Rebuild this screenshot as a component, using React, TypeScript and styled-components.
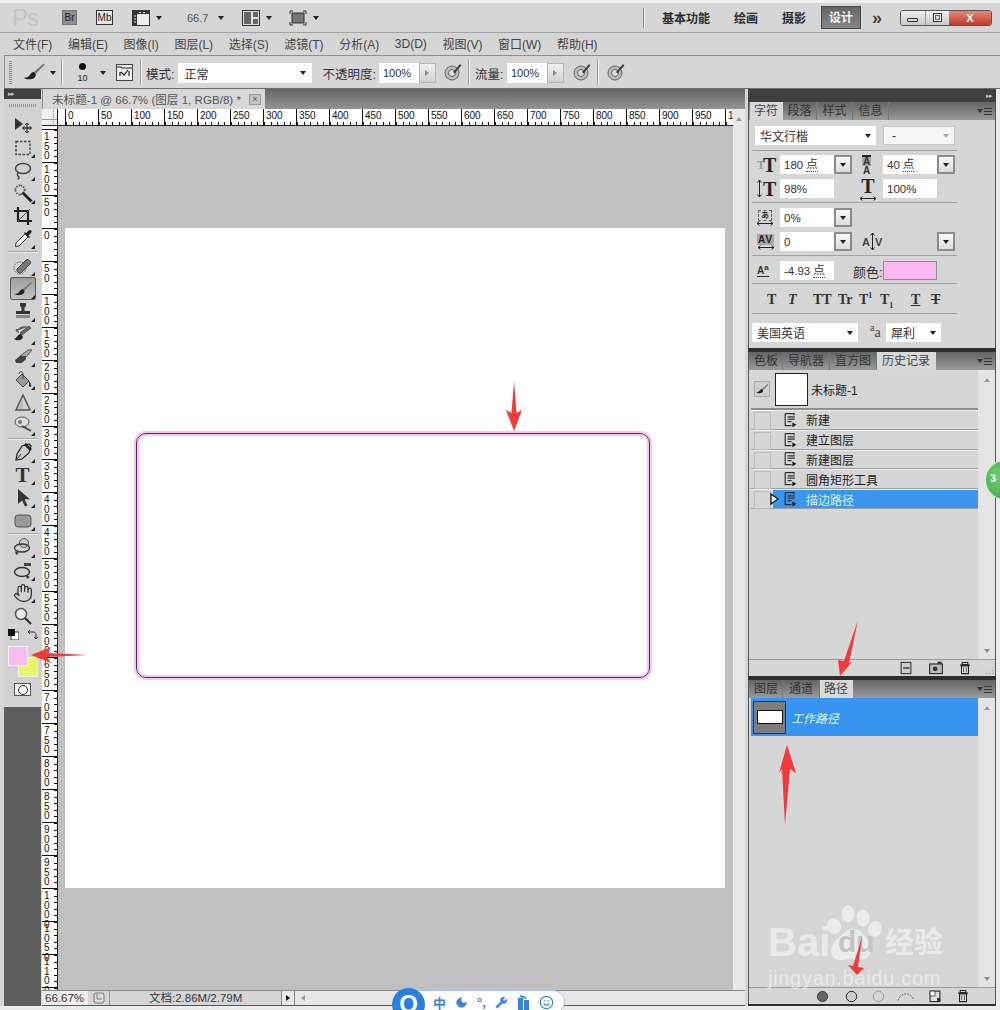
import React from 'react';
import styled, { createGlobalStyle } from 'styled-components';
import { Hand, Moon, Smile, Wrench } from 'lucide-react';

const GlobalStyle = createGlobalStyle`
  html, body { margin: 0; padding: 0; background: #d6d6d6; }
  body { font-family: "Liberation Sans", "Noto Sans CJK SC", sans-serif; color: #333; }
  * { box-sizing: border-box; }
`;

const Page = styled.div`
  position: relative;
  width: 1000px;
  height: 1010px;
  overflow: hidden;
  display: flex;
  flex-direction: column;
  background: #d6d6d6;
`;

/* ---------- title bar ---------- */
const TitleBar = styled.div`
  height: 33px;
  flex: none;
  display: flex;
  align-items: center;
  padding: 3px 8px 0 0;
  background: linear-gradient(#f0f0f0 0 3px, #d6d6d6 3px);
  border-bottom: 1px solid #a2a2a2;
`;
const Logo = styled.div`
  margin-left: 12px;
  width: 23px;
  font-size: 24px;
  line-height: 24px;
  color: #c4c4c4;
  letter-spacing: -1px;
`;
const BridgeBadge = styled.div<{ $ml: number; $w: number; $dark?: boolean }>`
  margin-left: ${p => p.$ml}px;
  width: ${p => p.$w}px;
  height: 15px;
  font-size: 10px;
  line-height: 13px;
  text-align: center;
  color: #222;
  background: ${p => (p.$dark ? '#8f8f8f' : '#e6e6e6')};
  border: 1px solid ${p => (p.$dark ? '#777' : '#333')};
`;
const TitleIcon = styled.div<{ $ml: number }>`
  margin-left: ${p => p.$ml}px;
  display: flex;
`;
const Caret = styled.span<{ $ml?: number; $c?: string }>`
  display: inline-block;
  flex: none;
  margin-left: ${p => p.$ml ?? 0}px;
  width: 0;
  height: 0;
  border-left: 3.5px solid transparent;
  border-right: 3.5px solid transparent;
  border-top: 4px solid ${p => p.$c ?? '#222'};
`;
const ZoomValue = styled.div`
  margin-left: 25px;
  width: 21px;
  font-size: 11px;
  color: #555;
`;
const TitleDivider = styled.div`
  margin-left: auto;
  width: 2px;
  height: 20px;
  border-left: 1px solid #8a8a8a;
  border-right: 1px solid #f0f0f0;
`;
const Workspace = styled.div<{ $ml: number }>`
  margin-left: ${p => p.$ml}px;
  font-size: 12px;
  font-weight: 700;
  color: #2c2c2c;
  white-space: nowrap;
`;
const ActiveWorkspace = styled.div`
  margin-left: 15px;
  width: 40px;
  height: 23px;
  line-height: 22px;
  text-align: center;
  font-size: 12px;
  font-weight: 700;
  color: #f4f4f4;
  background: linear-gradient(#666, #858585);
  border: 1px solid #4a4a4a;
`;
const MoreChevrons = styled.div`
  margin-left: 11px;
  width: 14px;
  font-size: 18px;
  line-height: 18px;
  font-weight: 700;
  color: #444;
`;
const WindowButtons = styled.div`
  margin-left: 14px;
  display: flex;
  height: 16px;
  width: 92px;
  border: 1px solid #555;
  border-radius: 3px;
  overflow: hidden;
`;
const WindowButton = styled.div<{ $close?: boolean }>`
  flex: ${p => (p.$close ? '0 0 42px' : '1')};
  display: flex;
  align-items: center;
  justify-content: center;
  font-size: 11px;
  font-weight: 700;
  color: #fff;
  background: ${p => (p.$close ? 'linear-gradient(#e58a78, #bc3b2a)' : 'linear-gradient(#f0f0f0, #c8c8c8)')};
  border-left: ${p => (p.$close ? 'none' : '1px solid #999')};
  &:first-child { border-left: none; }
`;
const MinGlyph = styled.span`
  width: 11px;
  height: 4px;
  margin-top: 5px;
  border: 1px solid #333;
  border-radius: 1px;
`;
const MaxGlyph = styled.span`
  width: 9px;
  height: 9px;
  border: 1px solid #333;
  box-shadow: inset 0 0 0 1px #eee, inset 0 0 0 2px #666;
`;

/* ---------- menu + options ---------- */
const MenuBar = styled.div`
  height: 22px;
  flex: none;
  display: flex;
  align-items: center;
  gap: 15.6px;
  padding: 0 0 1px 13px;
  font-size: 12px;
  color: #444;
`;
const OptionsBar = styled.div`
  height: 34px;
  flex: none;
  margin-left: 4px;
  padding-top: 2px;
  display: flex;
  align-items: center;
  background: #d6d6d6;
  border-top: 1px solid #8e8e8e;
  border-left: 1px solid #8e8e8e;
  border-bottom: 1px solid #6e6e6e;
`;
const Grip = styled.div`
  margin-left: 4px;
  width: 3px;
  height: 24px;
  background: repeating-linear-gradient(180deg, #8a8a8a 0 1px, transparent 1px 2px);
`;
const OptIcon = styled.div<{ $ml: number }>`
  margin-left: ${p => p.$ml}px;
  display: flex;
  align-items: center;
  margin-top: -2px;
`;
const OptDivider = styled.div<{ $ml: number }>`
  margin-left: ${p => p.$ml}px;
  width: 1px;
  height: 26px;
  margin-top: -2px;
  background: #a0a0a0;
  box-shadow: 1px 0 0 #efefef;
`;
const BrushTip = styled.div`
  margin-left: 12px;
  width: 17px;
  margin-top: -1px;
  display: flex;
  flex-direction: column;
  align-items: center;
  font-size: 9px;
  line-height: 10px;
  color: #222;
`;
const TipDot = styled.span`
  width: 7px;
  height: 7px;
  margin: 1px 0 3px;
  border-radius: 50%;
  background: #111;
`;
const OptLabel = styled.div<{ $ml: number }>`
  margin-left: ${p => p.$ml}px;
  font-size: 12.5px;
  color: #333;
  white-space: nowrap;
`;
const ModeSelect = styled.div`
  margin-left: 4px;
  width: 134px;
  height: 20px;
  padding: 0 6px;
  display: flex;
  align-items: center;
  justify-content: space-between;
  font-size: 12px;
  background: #fff;
`;
const PercentField = styled.div<{ $ml: number }>`
  margin-left: ${p => p.$ml}px;
  width: 40px;
  height: 20px;
  padding-left: 4px;
  font-size: 11px;
  line-height: 20px;
  background: #fff;
`;
const Stepper = styled.div`
  width: 17px;
  height: 20px;
  display: flex;
  align-items: center;
  justify-content: center;
  background: linear-gradient(#f2f2f2, #d0d0d0);
  border: 1px solid #b4b4b4;
`;
const SideCaret = styled.span<{ $c?: string }>`
  width: 0;
  height: 0;
  border-top: 3px solid transparent;
  border-bottom: 3px solid transparent;
  border-left: 4px solid ${p => p.$c ?? '#888'};
`;

/* ---------- workspace ---------- */
const Main = styled.div`
  height: 917px;
  flex: none;
  display: flex;
`;
const BottomEdge = styled.div`
  flex: 1;
  background: #ececec;
`;
const RightGutter = styled.div`
  flex: 1;
  background: #ececec;
`;

/* left tools */
const ToolColumn = styled.div`
  width: 37px;
  margin-left: 4px;
  margin-right: 1px;
  display: flex;
  flex-direction: column;
  background: #5e5e5e;
`;
const DarkStrip = styled.div<{ $h: number; $right?: boolean }>`
  height: ${p => p.$h}px;
  flex: none;
  font-size: 7px;
  line-height: ${p => p.$h}px;
  letter-spacing: -1px;
  color: #c8c8c8;
  padding: 0 4px;
  text-align: ${p => (p.$right ? 'right' : 'left')};
  background: #3f3f3f;
`;
const Toolbar = styled.div`
  position: relative;
  height: 608px;
  flex: none;
  padding-top: 14.6px;
  background: #d2d2d2;
  display: flex;
  flex-direction: column;
  align-items: center;
  &::before {
    content: '';
    position: absolute;
    top: 5px;
    left: 5px;
    right: 5px;
    height: 3px;
    background: repeating-linear-gradient(90deg, #999 0 1px, transparent 1px 2px);
  }
`;
const Tool = styled.div<{ $active?: boolean; $corner?: boolean }>`
  position: relative;
  flex: none;
  width: ${p => (p.$active ? 26 : 32)}px;
  height: 22.8px;
  display: flex;
  align-items: center;
  justify-content: center;
  border-radius: 3px;
  background: ${p => (p.$active ? 'linear-gradient(#9c9c9c, #c4c4c4)' : 'none')};
  box-shadow: ${p => (p.$active ? 'inset 0 0 0 1px #5a5a5a' : 'none')};
  &::after {
    content: '';
    display: ${p => (p.$corner ? 'block' : 'none')};
    position: absolute;
    right: ${p => (p.$active ? 1 : 4)}px;
    bottom: 1px;
    border-left: 4px solid transparent;
    border-bottom: 4px solid #222;
  }
`;
const ToolSep = styled.div`
  flex: none;
  width: 30px;
  height: 4px;
  background: linear-gradient(transparent 1px, #a4a4a4 1px, #a4a4a4 2px, #eee 2px, #eee 3px, transparent 3px);
`;
const SerifT = styled.span`
  font-family: "Liberation Serif", serif;
  font-size: 21px;
  line-height: 22px;
  font-weight: 700;
  color: #333;
`;
const DefaultColors = styled.div`
  flex: none;
  width: 30px;
  height: 14px;
  display: flex;
  align-items: center;
  justify-content: space-between;
`;
const ColorWell = styled.div`
  position: relative;
  flex: none;
  width: 30px;
  height: 31px;
  margin-top: 5px;
`;
const Foreground = styled.div`
  position: relative;
  z-index: 1;
  width: 20px;
  height: 20px;
  background: #f8bdf0;
  border: 1px solid #f2f2f2;
`;
const Background = styled.div`
  position: absolute;
  left: 10px;
  top: 11px;
  width: 20px;
  height: 20px;
  background: #e6f56c;
  border: 1px solid #efefef;
`;
const MaskButton = styled.div`
  flex: none;
  width: 17px;
  height: 13px;
  margin-top: 6px;
  background: #f4f4f4;
  border: 1px solid #555;
  display: flex;
  align-items: center;
  justify-content: center;
  &::after {
    content: '';
    width: 8px;
    height: 8px;
    border: 1px solid #333;
    border-radius: 50%;
  }
`;

/* document */
const DocColumn = styled.div`
  width: 703px;
  flex: none;
  display: flex;
  flex-direction: column;
`;
const DocTabs = styled.div`
  height: 20px;
  flex: none;
  background: linear-gradient(#666, #939393);
`;
const DocTab = styled.div`
  width: 223px;
  height: 20px;
  padding: 0 4px 0 9px;
  display: flex;
  align-items: center;
  justify-content: space-between;
  font-size: 11.6px;
  color: #555;
  white-space: nowrap;
  background: #d8d8d8;
  border-left: 1px solid #8a8a8a;
`;
const TabClose = styled.span`
  width: 12px;
  height: 11px;
  flex: none;
  font-size: 9px;
  line-height: 9px;
  text-align: center;
  color: #555;
  background: #c4c4c4;
  border: 1px solid #999;
`;
const DocBody = styled.div`
  flex: 1;
  min-height: 0;
  display: flex;
`;
const DocMain = styled.div`
  width: 691px;
  flex: none;
  display: flex;
  flex-direction: column;
`;
const RulerTop = styled.div`
  height: 17px;
  flex: none;
  display: flex;
  background: #fff;
  border-bottom: 1px solid #222;
`;
const RulerCorner = styled.div`
  width: 16px;
  flex: none;
  background:
    linear-gradient(#999, #999) 0 10px / 100% 1px no-repeat,
    repeating-linear-gradient(180deg, #888 0 1px, transparent 1px 2px) 11px 0 / 1px 100% no-repeat,
    #f2f2f2;
  border-right: 1px solid #222;
`;
const RulerTrack = styled.div`
  flex: 1;
  min-width: 0;
  padding-left: 7px;
  display: flex;
  overflow: hidden;
`;
const RulerCell = styled.div`
  flex: 0 0 33px;
  padding: 1px 0 0 2px;
  font-size: 10px;
  line-height: 11px;
  color: #111;
  border-left: 1px solid #111;
  background: repeating-linear-gradient(90deg, #111 0 1px, transparent 1px 6.6px) 0 100% / 100% 3px no-repeat;
`;
const CanvasRow = styled.div`
  flex: 1;
  min-height: 0;
  display: flex;
`;
const RulerLeft = styled.div`
  width: 16px;
  flex: none;
  padding-top: 3px;
  overflow: hidden;
  background: #fff;
  border-right: 1px solid #222;
`;
const RulerRow = styled.div`
  height: 33px;
  padding: 2px 0 0 2px;
  font-size: 10px;
  line-height: 9.6px;
  color: #111;
  border-top: 1px solid #111;
  background: repeating-linear-gradient(180deg, #111 0 1px, transparent 1px 6.6px) 100% 0 / 3px 100% no-repeat;
`;
const RulerDigits = styled.div`
  width: 7px;
  word-break: break-all;
`;
const Canvas = styled.div`
  flex: 1;
  padding: 102px 0 0 7px;
  background: #c0c0c0;
`;
const Sheet = styled.div`
  width: 660px;
  height: 660px;
  padding: 205px 0 0 71px;
  background: #fff;
`;
const StrokedPath = styled.div`
  width: 514px;
  height: 245px;
  border: 1.5px solid #58245f;
  border-radius: 10px;
  box-shadow: 0 0 0 2px #f6c8f0, inset 0 0 0 2px #f6c8f0;
`;
const VScroll = styled.div`
  width: 12px;
  flex: none;
  padding-top: 8px;
  display: flex;
  justify-content: center;
  background: #e8e8e8;
`;
const UpCaret = styled.span`
  width: 0;
  height: 0;
  border-left: 3.5px solid transparent;
  border-right: 3.5px solid transparent;
  border-bottom: 4px solid #9a9a9a;
`;
const StatusBar = styled.div`
  height: 16px;
  flex: none;
  display: flex;
  align-items: stretch;
  font-size: 11.5px;
  line-height: 15px;
  border-top: 1px solid #888;
  border-bottom: 1px solid #555;
`;
const ZoomField = styled.div`
  width: 46px;
  padding-left: 3px;
  background: #eee;
`;
const StatusIcon = styled.div`
  width: 22px;
  display: flex;
  align-items: center;
  justify-content: center;
  border-right: 1px solid #999;
`;
const DocInfo = styled.div`
  width: 171px;
  padding-left: 39px;
  white-space: nowrap;
`;
const StatusArrow = styled.div`
  width: 14px;
  display: flex;
  align-items: center;
  justify-content: center;
  background: #e8e8e8;
  border-left: 1px solid #888;
  border-right: 1px solid #888;
`;
const HScroll = styled.div`
  flex: 1;
  padding-left: 6px;
  display: flex;
  align-items: center;
  background: #e8e8e8;
`;
const LeftCaret = styled.span`
  width: 0;
  height: 0;
  border-top: 3px solid transparent;
  border-bottom: 3px solid transparent;
  border-right: 4px solid #999;
`;

/* right panels */
const RightColumn = styled.div`
  width: 248px;
  flex: none;
  margin-left: 3px;
  display: flex;
  flex-direction: column;
  background: #2e2e2e;
  border-bottom: 1px solid #333;
`;
const Panel = styled.div<{ $h: number; $mt?: number }>`
  height: ${p => p.$h}px;
  flex: none;
  margin-top: ${p => p.$mt ?? 0}px;
  display: flex;
  flex-direction: column;
  background: #d6d6d6;
  border-left: 1px solid #555;
  border-right: 1px solid #555;
`;
const TabStrip = styled.div`
  height: 18px;
  flex: none;
  display: flex;
  align-items: stretch;
  padding-left: 1px;
  background: linear-gradient(#646464, #9a9a9a);
`;
const PanelTab = styled.div<{ $w: number; $active?: boolean }>`
  width: ${p => p.$w}px;
  flex: none;
  text-align: center;
  font-size: 12px;
  line-height: 18px;
  color: ${p => (p.$active ? '#444' : '#333')};
  background: ${p => (p.$active ? '#d8d8d8' : 'transparent')};
  border-right: 1px solid ${p => (p.$active ? '#d8d8d8' : '#777')};
`;
const PanelMenu = styled.div`
  margin-left: auto;
  margin-right: 3px;
  display: flex;
  align-items: center;
  gap: 1px;
`;
const MenuLines = styled.span`
  width: 8px;
  height: 7px;
  background: repeating-linear-gradient(180deg, #333 0 1px, transparent 1px 3px);
`;
const CharRow = styled.div<{ $mt: number; $shift?: number }>`
  height: 19px;
  flex: none;
  margin-top: ${p => p.$mt}px;
  padding-left: ${p => 6 + (p.$shift ?? 0)}px;
  display: flex;
  align-items: stretch;
`;
const CharSep = styled.div<{ $mt: number }>`
  height: 1px;
  flex: none;
  width: 205px;
  margin: ${p => p.$mt}px 0 0 3px;
  background: #a2a2a2;
`;
const FontSelect = styled.div<{ $w: number }>`
  width: ${p => p.$w}px;
  padding: 0 5px;
  display: flex;
  align-items: center;
  justify-content: space-between;
  font-size: 12px;
  background: #fff;
`;
const StyleSelect = styled.div`
  width: 72px;
  margin-left: 7px;
  padding: 0 5px 0 8px;
  display: flex;
  align-items: center;
  justify-content: space-between;
  font-size: 12px;
  background: #f6f6f6;
  border: 1px solid #c4c4c4;
`;
const CharIcon = styled.div<{ $w: number; $pl?: number }>`
  position: relative;
  width: ${p => p.$w}px;
  flex: none;
  display: flex;
  align-items: center;
  padding-left: ${p => p.$pl ?? 2}px;
`;
/* real letters used as the little character-panel marks */
const SerifMark = styled.span<{ $size: number; $c?: string; $ml?: number }>`
  font-family: "Liberation Serif", serif;
  font-size: ${p => p.$size}px;
  line-height: 1;
  font-weight: 700;
  margin-left: ${p => p.$ml ?? 0}px;
  color: ${p => p.$c ?? '#222'};
`;
const StackMark = styled.div`
  display: flex;
  flex-direction: column;
  align-items: center;
  font-size: 10px;
  line-height: 9px;
  font-weight: 700;
  color: #333;
`;
const LeadingTop = styled.span`
  padding: 0 1px;
  color: #333;
  background: #a8a8a8;
  border-top: 2px solid #222;
`;
const BoxedKana = styled.span`
  width: 14px;
  height: 11px;
  font-size: 8px;
  line-height: 9px;
  text-align: center;
  color: #333;
  border: 1px dashed #666;
`;
const KernLetters = styled.span`
  padding: 0 1px;
  font-size: 10px;
  line-height: 11px;
  font-weight: 700;
  letter-spacing: 1px;
  color: #222;
  background: #a8a8a8;
`;
const TrackLetters = styled.span`
  display: flex;
  align-items: center;
  font-size: 11px;
  font-weight: 700;
  color: #444;
`;
const ShiftLetters = styled.span`
  font-size: 10px;
  line-height: 11px;
  font-weight: 700;
  color: #333;
  border-bottom: 1px solid #333;
  sup { font-size: 8px; line-height: 0; }
`;
const CharField = styled.div<{ $disabled?: boolean }>`
  width: 54px;
  flex: none;
  padding-left: 4px;
  display: flex;
  align-items: center;
  gap: 3px;
  font-size: 11.5px;
  color: #333;
  white-space: nowrap;
  background: ${p => (p.$disabled ? '#d4d4d4' : '#fff')};
`;
const DottedUnit = styled.span`
  border-bottom: 1px dotted #444;
  line-height: 14px;
`;
const DropButton = styled.div`
  width: 18px;
  flex: none;
  display: flex;
  align-items: center;
  justify-content: center;
  background: linear-gradient(#fafafa, #dcdcdc);
  border: 2px solid #8c8c8c;
`;
const ColorLabel = styled.div`
  width: 30px;
  flex: none;
  font-size: 13px;
  line-height: 24px;
  white-space: nowrap;
  color: #333;
`;
const TextColor = styled.div`
  width: 54px;
  flex: none;
  background: #fbb9f2;
  border: 1px solid #8e8e8e;
`;
const StyleButtons = styled.div`
  height: 20px;
  flex: none;
  margin-top: 6px;
  padding-left: 18px;
  display: flex;
  align-items: center;
`;
const StyleGlyph = styled.span<{ $w: number; $italic?: boolean; $under?: boolean; $strike?: boolean }>`
  width: ${p => p.$w}px;
  flex: none;
  font-family: "Liberation Serif", serif;
  font-size: 14px;
  font-weight: 700;
  font-style: ${p => (p.$italic ? 'italic' : 'normal')};
  text-decoration: ${p => (p.$under ? 'underline' : p.$strike ? 'line-through' : 'none')};
  color: #333;
  white-space: nowrap;
  sup, sub { font-size: 8px; line-height: 0; }
`;
const AaGlyph = styled.div`
  width: 28px;
  flex: none;
  padding-left: 12px;
  font-family: "Liberation Serif", serif;
  font-size: 14px;
  line-height: 19px;
  color: #444;
  white-space: nowrap;
  sup { font-size: 10px; line-height: 0; }
`;

const PanelBody = styled.div<{ $h: number }>`
  height: ${p => p.$h}px;
  flex: none;
  display: flex;
`;
const ListArea = styled.div`
  flex: 1;
  min-width: 0;
  padding-left: 2px;
`;
const PanelScroll = styled.div`
  width: 17px;
  flex: none;
  display: flex;
  flex-direction: column;
  align-items: center;
  justify-content: space-between;
  padding: 8px 0 6px;
  background: #e4e4e4;
`;
const DownCaret = styled(Caret)`
  border-top-color: #8a8a8a;
`;
const Snapshot = styled.div`
  height: 40px;
  display: flex;
  align-items: center;
  font-size: 12px;
  color: #222;
  border-bottom: 2px solid #8e8e8e;
`;
const SnapshotSource = styled.div`
  width: 16px;
  height: 16px;
  margin-left: 3px;
  display: flex;
  align-items: center;
  justify-content: center;
  border: 1px solid #aaa;
  background: #cfcfcf;
`;
const Thumb = styled.div`
  width: 33px;
  height: 33px;
  margin: 0 3px 0 5px;
  background: #fff;
  border: 1px solid #222;
`;
const HistoryRow = styled.div`
  height: 19.8px;
  display: flex;
  align-items: stretch;
  border-bottom: 1px solid #a0a0a0;
  border-top: 1px solid #eee;
`;
const CheckCell = styled.div`
  position: relative;
  width: 22px;
  flex: none;
  padding: 1px 0 1px 3px;
  &::before {
    content: '';
    display: block;
    width: 15px;
    height: 100%;
    border: 1px solid #bcbcbc;
  }
`;
const StateMarker = styled.svg`
  position: absolute;
  left: 19px;
  top: 3px;
`;
const HistoryName = styled.div<{ $selected?: boolean }>`
  flex: 1;
  padding-left: 9px;
  display: flex;
  align-items: center;
  gap: 8px;
  font-size: 12px;
  color: ${p => (p.$selected ? '#d8f2ff' : '#222')};
  background: ${p => (p.$selected ? '#3b96ee' : 'transparent')};
`;
const PathRow = styled.div`
  height: 38px;
  padding-left: 2px;
  display: flex;
  align-items: center;
  background: #3794f0;
`;
const PathThumb = styled.div`
  width: 33px;
  height: 33px;
  display: flex;
  align-items: center;
  justify-content: center;
  background: #7d7d7d;
  border: 1px solid #123a6c;
  &::after {
    content: '';
    width: 24px;
    height: 12px;
    background: #fff;
    border: 1px solid #111;
  }
`;
const PathName = styled.div`
  margin-left: 5px;
  font-size: 12px;
  font-style: italic;
  color: #d8f6ff;
`;
const PanelFooter = styled.div<{ $h: number }>`
  height: ${p => p.$h}px;
  flex: none;
  position: relative;
  display: flex;
  align-items: center;
  border-top: 1px solid #9a9a9a;
`;
const FooterIcon = styled.div<{ $ml: number }>`
  margin-left: ${p => p.$ml}px;
  display: flex;
`;
const SizeGrip = styled.span`
  position: absolute;
  right: 1px;
  bottom: 1px;
  width: 9px;
  height: 9px;
  background: radial-gradient(circle, #999 0 1px, transparent 1px) 0 0 / 3px 3px;
  clip-path: polygon(100% 0, 100% 100%, 0 100%);
`;

/* things lying over the window */
const ArrowLayer = styled.svg`
  position: absolute;
  left: 0;
  top: 0;
  z-index: 5;
  pointer-events: none;
`;
const Badge = styled.div`
  position: absolute;
  left: 985px;
  top: 460px;
  width: 40px;
  height: 40px;
  padding: 11px 0 0 4px;
  z-index: 4;
  font-size: 11px;
  font-weight: 700;
  color: #fff;
  border-radius: 50%;
  background: radial-gradient(circle at 40% 40%, #6fd06f, #37a53f);
  border: 1px solid #d8f0d8;
`;
const Watermark = styled.div`
  position: absolute;
  left: 768px;
  top: 905px;
  width: 190px;
  z-index: 3;
  color: rgba(255, 255, 255, 0.5);
  pointer-events: none;
`;
const Paw = styled.svg`
  position: absolute;
  left: 52px;
  top: 0;
`;
const WaterTop = styled.div`
  position: relative;
  height: 60px;
  display: flex;
  align-items: flex-end;
`;
const WaterBai = styled.span`
  font-size: 40px;
  line-height: 46px;
  font-weight: 700;
  width: 70px;
`;
const WaterDu = styled.span`
  position: relative;
  font-size: 30px;
  line-height: 46px;
  font-weight: 700;
  width: 47px;
  color: #c4c4c4;
`;
const WaterCn = styled.span`
  font-size: 29px;
  line-height: 44px;
  font-weight: 700;
`;
const WaterUrl = styled.div`
  margin-top: 1px;
  font-size: 20px;
  line-height: 24px;
  letter-spacing: 0.7px;
`;
const ImeBar = styled.div`
  position: absolute;
  left: 402px;
  top: 990px;
  width: 163px;
  height: 24px;
  z-index: 4;
  padding-left: 30px;
  display: flex;
  align-items: center;
  gap: 9px;
  color: #3a84d0;
  font-size: 13px;
  font-weight: 700;
  background: #fff;
  border: 1px solid #a8c8e8;
  border-radius: 12px;
`;
const ImeLogo = styled.div`
  position: absolute;
  left: 392px;
  top: 988px;
  width: 33px;
  height: 33px;
  z-index: 5;
  padding-top: 2px;
  text-align: center;
  font-size: 24px;
  line-height: 27px;
  font-weight: 700;
  color: #fff;
  border-radius: 50%;
  background: #2a7fdc;
`;

/* ---------- icons ---------- */
const I = ({ s = 20, children }: { s?: number; children: React.ReactNode }) => (
  <svg width={s} height={s} viewBox="0 0 20 20">{children}</svg>
);
const ink = '#333';
const BrushGlyph = ({ s = 20 }: { s?: number }) => (
  <I s={s}>
    <path d="M18 3 10 10l1.5 1.5L19 4z" fill="#777" />
    <path d="M10 10c-3 0-3 3-5 4-1 .6-2.5 1-3.5 1 2 1.6 7 1.6 9-.5 1-1.2 1.5-2.5.5-3.5z" fill="#222" />
  </I>
);
const Target = () => (
  <I>
    <circle cx="9" cy="11" r="7" fill="#bbb" stroke="#666" />
    <circle cx="9" cy="11" r="3.5" fill="#ddd" stroke="#666" />
    <path d="m10 10 7-8 1.5 1.5-7 8z" fill="#444" />
  </I>
);
const toolIcons: Record<string, React.ReactNode> = {
  move: <I><path d="M2 3v12l8-6z" fill={ink} /><path d="M14 8v10M9.5 13h9" stroke={ink} strokeWidth="1.3" /><path d="m12 10 2-2 2 2M12 16l2 2 2-2M11.5 11l-2 2 2 2M16.5 11l2 2-2 2" stroke={ink} fill="none" /></I>,
  marquee: <I><rect x="3" y="3.5" width="14" height="13" fill="none" stroke="#444" strokeWidth="1.4" strokeDasharray="2.5 1.5" /></I>,
  lasso: <I><ellipse cx="10" cy="7.5" rx="7.5" ry="5" fill="none" stroke="#444" strokeWidth="1.5" /><path d="M5 12c-1 1.5-.5 3 .5 3.5S6 18 4.5 18" fill="none" stroke="#444" strokeWidth="1.4" /></I>,
  wand: <I><circle cx="7" cy="7" r="4.5" fill="none" stroke="#555" strokeWidth="1.8" strokeDasharray="1.3 1.1" /><path d="M1 7h2M11 7h2M7 1v2M7 11v2" stroke="#666" /><path d="m9.500 9.500 9 9" stroke="#222" strokeWidth="2.8" /></I>,
  crop: <I><path d="M5 1v14h14M1 5h14v14" fill="none" stroke="#222" strokeWidth="2.2" /><path d="m5 15 12-12" stroke="#555" /></I>,
  eyedropper: <I><path d="m12 5-9 9-.5 3.5L6 17l9-9z" fill="#eee" stroke="#333" /><path d="m11 4 5 5 1-1-1.5-1.5L18 4c.8-1 .8-1.8 0-2.5s-1.6-.6-2.5.2l-2.5 2.5L12 3z" fill="#222" /></I>,
  heal: <I><circle cx="7" cy="12" r="6" fill="none" stroke="#555" strokeDasharray="1.5 1.2" /><path d="m4 13 9-9c2-2 6 2 4 4l-9 9c-2 1-5-2-4-4z" fill="#777" stroke="#444" /></I>,
  brush: <BrushGlyph />,
  stamp: <I><path d="M7 2h6v3l-1.5 1.5V10H17v3H3v-3h5.5V6.500L7 5z" fill="#333" /><rect x="3" y="14" width="14" height="3" fill="#888" /></I>,
  history: <I><path d="M16 2 7 9l2 2 9-7zM14 3c-4-1-9 1-10 4" fill="#666" stroke="#555" /><path d="M8 10c-3 0-3 3-7 5 3 2 8 2 9-2z" fill="#222" /><path d="M4 5c-2 2 0 3 2 3" fill="none" stroke="#333" /></I>,
  eraser: <I><path d="M7 9 15 3h4l-6 7z" fill="#aaa" stroke="#555" /><path d="M2 13 7 9h6v3l-4 4H3z" fill="#444" /></I>,
  bucket: <I><path d="m3 10 6-6 7 7-6 6z" fill="#999" stroke="#444" /><path d="M6 4c0-3 4-3 4 0v5" fill="none" stroke="#444" /><path d="M16 11c1.500 2 3 4 2 5.500-1 1-2.500 0-2-1.500z" fill="#333" /></I>,
  blur: <I><path d="M10 2 3 17h14z" fill="none" stroke="#555" strokeWidth="1.5" /><path d="M10 6 5.500 16H10z" fill="#bbb" /></I>,
  dodge: <I><ellipse cx="9" cy="7" rx="7" ry="5" fill="#ddd" stroke="#555" /><circle cx="7" cy="7" r="2" fill="#777" /><path d="m9 11 9 5" stroke="#444" strokeWidth="2" /></I>,
  pen: <I><path d="M16 2 9 4 4 12l-1 6 6-1 7-6 2-7z" fill="#ccc" stroke="#222" strokeWidth="1.2" /><path d="m3 18 5-6" stroke="#222" /><path d="m13 1 6 6-2 2-6-6z" fill="#222" /></I>,
  select: <I><path d="M5 1v15l4-3.500 3 6 2.500-1.200-3-6H17z" fill="#333" /></I>,
  shape: <I><rect x="2" y="4" width="16" height="12" rx="3" fill="#999" stroke="#555" /></I>,
  rotate: <I><circle cx="11" cy="6" r="4.5" fill="#ccc" stroke="#555" /><ellipse cx="9" cy="11" rx="7.5" ry="4" fill="none" stroke="#333" strokeWidth="1.3" /><path d="m2 14 4 2-3 2z" fill="#333" /></I>,
  orbit: <I><ellipse cx="9" cy="12" rx="7.500" ry="4.500" fill="none" stroke="#333" strokeWidth="1.4" /><rect x="11" y="3" width="7" height="3" fill="#444" /><path d="m13 15 4 2-3 2z" fill="#333" /></I>,
  hand: <Hand size={20} strokeWidth={1.5} color="#333" />,
  zoom: <I><circle cx="8" cy="8" r="5.500" fill="#eee" stroke="#555" strokeWidth="1.5" /><path d="m12 12 6 6" stroke="#333" strokeWidth="2.2" /></I>,
};

const FileDocIcon = ({ s = 16 }: { s?: number }) => (
  <I s={s}>
    <path d="M4 2h11v2M4 2v15h8M7 6h9M7 9h9M7 12h5" fill="none" stroke="#333" strokeWidth="1.5" />
    <path d="M13 13v6l5-3z" fill="#111" />
  </I>
);
const NewLayerIcon = () => (
  <I s={14}><rect x="3" y="2" width="14" height="16" fill="#ccc" stroke="#333" strokeWidth="1.5" /><rect x="6" y="9" width="9" height="2" fill="#333" /></I>
);
const CameraIcon = () => (
  <I s={16}><rect x="2" y="5" width="16" height="12" fill="#bbb" stroke="#333" strokeWidth="1.5" /><rect x="12" y="2" width="5" height="3" fill="#333" /><circle cx="9" cy="11" r="3" fill="#333" /></I>
);
const TrashIcon = () => (
  <I s={14}><path d="M6 2h8v3H6z" fill="none" stroke="#222" strokeWidth="1.5" /><rect x="3" y="5" width="14" height="2" fill="#222" /><path d="M5 7h10v11H5z" fill="#ddd" stroke="#222" strokeWidth="1.5" /><path d="M8 9v7M12 9v7" stroke="#222" /></I>
);
const NewItemIcon = () => (
  <I s={14}><rect x="3" y="3" width="14" height="15" fill="#ddd" stroke="#222" strokeWidth="1.5" /><path d="M3 3h7v7H3z" fill="#fff" stroke="#222" /><path d="M13 13h4v4h-4z" fill="#222" /></I>
);
const WideArrow = ({ w = 16 }: { w?: number }) => (
  <svg width={w} height="5" viewBox={`0 0 ${w} 5`}>
    <path d={`M0 2.500h${w}M2.500 .5 0 2.500l2.500 2M${w - 2.5} .5 ${w} 2.500l-2.500 2`} fill="none" stroke="#222" />
  </svg>
);
const TallArrow = ({ h = 17 }: { h?: number }) => (
  <svg width="5" height={h} viewBox={`0 0 5 ${h}`}>
    <path d={`M2.500 0v${h}M.5 2.500 2.500 0l2 2.500M.5 ${h - 2.5} 2.500 ${h}l2-2.500`} fill="none" stroke="#222" />
  </svg>
);

const tools1 = ['move', 'marquee', 'lasso', 'wand', 'crop', 'eyedropper'];
const tools2 = ['heal', 'brush', 'stamp', 'history', 'eraser', 'bucket', 'blur', 'dodge'];
const tools3 = ['pen', 'type', 'select', 'shape'];
const tools4 = ['rotate', 'orbit', 'hand', 'zoom'];
const noCorner = ['move', 'zoom', 'crop'];

const renderTool = (name: string) => (
  <Tool key={name} $active={name === 'brush'} $corner={!noCorner.includes(name)}>
    {name === 'type' ? <SerifT>T</SerifT> : toolIcons[name]}
  </Tool>
);

const menus = ['文件(F)', '编辑(E)', '图像(I)', '图层(L)', '选择(S)', '滤镜(T)', '分析(A)', '3D(D)', '视图(V)', '窗口(W)', '帮助(H)'];
const topLabels = Array.from({ length: 21 }, (_, i) => (i === 20 ? '1' : String(i * 50)));
const sideLabels = [150, 100, 50, ...Array.from({ length: 24 }, (_, i) => i * 50)];
const historyItems = ['新建', '建立图层', '新建图层', '圆角矩形工具', '描边路径'];

const App = () => (
  <Page>
    <GlobalStyle />

    <TitleBar>
      <Logo>Ps</Logo>
      <BridgeBadge $ml={27} $w={15} $dark>Br</BridgeBadge>
      <BridgeBadge $ml={19} $w={17}>Mb</BridgeBadge>
      <TitleIcon $ml={19}>
        <svg width="18" height="16" viewBox="0 0 18 16">
          <rect x="0.5" y="0.5" width="17" height="15" fill="#eee" stroke="#333" />
          <rect x="1" y="1" width="16" height="3" fill="#333" />
          <rect x="1" y="1" width="4" height="14" fill="#333" />
          <path d="M2 6h2M2 9h2M2 12h2M7 2.500h2M11 2.500h2" stroke="#eee" />
        </svg>
      </TitleIcon>
      <Caret $ml={6} />
      <ZoomValue>66.7</ZoomValue>
      <Caret $ml={10} />
      <TitleIcon $ml={18}>
        <svg width="18" height="16" viewBox="0 0 18 16">
          <rect x="0.5" y="0.5" width="17" height="15" fill="#ddd" stroke="#333" />
          <rect x="2" y="2" width="7" height="12" fill="#666" />
          <rect x="11" y="2" width="5" height="5" fill="#666" />
          <rect x="11" y="9" width="5" height="5" fill="#666" />
        </svg>
      </TitleIcon>
      <Caret $ml={6} />
      <TitleIcon $ml={17}>
        <svg width="18" height="16" viewBox="0 0 18 16">
          <rect x="3" y="3" width="12" height="10" fill="#777" stroke="#333" />
          <path d="M1 4V1h3M14 1h3v3M17 12v3h-3M4 15H1v-3" fill="none" stroke="#333" />
        </svg>
      </TitleIcon>
      <Caret $ml={6} />
      <TitleDivider />
      <Workspace $ml={17}>基本功能</Workspace>
      <Workspace $ml={24}>绘画</Workspace>
      <Workspace $ml={24}>摄影</Workspace>
      <ActiveWorkspace>设计</ActiveWorkspace>
      <MoreChevrons>»</MoreChevrons>
      <WindowButtons>
        <WindowButton><MinGlyph /></WindowButton>
        <WindowButton><MaxGlyph /></WindowButton>
        <WindowButton $close>X</WindowButton>
      </WindowButtons>
    </TitleBar>

    <MenuBar>
      {menus.map(m => <span key={m}>{m}</span>)}
    </MenuBar>

    <OptionsBar>
      <Grip />
      <OptIcon $ml={10}><BrushGlyph s={24} /></OptIcon>
      <Caret $ml={4} />
      <OptDivider $ml={5} />
      <BrushTip><TipDot />10</BrushTip>
      <Caret $ml={9} />
      <OptIcon $ml={10}>
        <svg width="17" height="17" viewBox="0 0 17 17">
          <rect x="0.500" y="0.500" width="16" height="16" fill="#eee" stroke="#444" />
          <path d="M1 3h4l1 1h10M5 8l3 3 4-5M4 8v4M13 7v5" fill="none" stroke="#222" strokeWidth="1.2" />
        </svg>
      </OptIcon>
      <OptDivider $ml={7} />
      <OptLabel $ml={5}>模式:</OptLabel>
      <ModeSelect>正常<Caret /></ModeSelect>
      <OptLabel $ml={10}>不透明度:</OptLabel>
      <PercentField $ml={3}>100%</PercentField>
      <Stepper><SideCaret /></Stepper>
      <OptIcon $ml={7}><Target /></OptIcon>
      <OptDivider $ml={5} />
      <OptLabel $ml={6}>流量:</OptLabel>
      <PercentField $ml={3.5}>100%</PercentField>
      <Stepper><SideCaret /></Stepper>
      <OptIcon $ml={8}><Target /></OptIcon>
      <OptDivider $ml={5} />
      <OptIcon $ml={8}><Target /></OptIcon>
    </OptionsBar>

    <Main>
      <ToolColumn>
        <DarkStrip $h={10}>▸▸</DarkStrip>
        <Toolbar>
          {tools1.map(renderTool)}
          <ToolSep />
          {tools2.map(renderTool)}
          <ToolSep />
          {tools3.map(renderTool)}
          <ToolSep />
          {tools4.map(renderTool)}
          <DefaultColors>
            <svg width="11" height="11" viewBox="0 0 11 11">
              <rect x="3" y="3" width="8" height="8" fill="#fff" stroke="#333" />
              <rect width="7" height="7" fill="#111" />
            </svg>
            <svg width="11" height="11" viewBox="0 0 11 11">
              <path d="M3 1 1 3l2 2M1 3h5c2 0 3 1 3 3v3M7 8l2 2 2-2" fill="none" stroke="#333" />
            </svg>
          </DefaultColors>
          <ColorWell>
            <Foreground />
            <Background />
          </ColorWell>
          <MaskButton />
        </Toolbar>
      </ToolColumn>

      <DocColumn>
        <DocTabs>
          <DocTab>
            未标题-1 @ 66.7% (图层 1, RGB/8) *
            <TabClose>×</TabClose>
          </DocTab>
        </DocTabs>
        <DocBody>
          <DocMain>
            <RulerTop>
              <RulerCorner />
              <RulerTrack>
                {topLabels.map(t => <RulerCell key={t}>{t}</RulerCell>)}
              </RulerTrack>
            </RulerTop>
            <CanvasRow>
              <RulerLeft>
                {sideLabels.map((n, i) => (
                  <RulerRow key={i}><RulerDigits>{n}</RulerDigits></RulerRow>
                ))}
              </RulerLeft>
              <Canvas>
                <Sheet>
                  <StrokedPath />
                </Sheet>
              </Canvas>
            </CanvasRow>
          </DocMain>
          <VScroll><UpCaret /></VScroll>
        </DocBody>
        <StatusBar>
          <ZoomField>66.67%</ZoomField>
          <StatusIcon>
            <svg width="12" height="12" viewBox="0 0 12 12">
              <rect x="1" y="1" width="10" height="10" rx="2" fill="#ddd" stroke="#777" />
              <path d="M4 2v5h5" fill="none" stroke="#777" />
            </svg>
          </StatusIcon>
          <DocInfo>文档:2.86M/2.79M</DocInfo>
          <StatusArrow><SideCaret $c="#111" /></StatusArrow>
          <HScroll><LeftCaret /></HScroll>
        </StatusBar>
      </DocColumn>

      <RightColumn>
        <DarkStrip $h={13} $right>▸▸</DarkStrip>
        <Panel $h={246}>
          <TabStrip>
            <PanelTab $w={33} $active>字符</PanelTab>
            <PanelTab $w={34}>段落</PanelTab>
            <PanelTab $w={36}>样式</PanelTab>
            <PanelTab $w={36}>信息</PanelTab>
            <PanelMenu><Caret $c="#333" /><MenuLines /></PanelMenu>
          </TabStrip>
          <CharRow $mt={6}>
            <FontSelect $w={121}>华文行楷<Caret /></FontSelect>
            <StyleSelect>-<Caret $c="#aaa" /></StyleSelect>
          </CharRow>
          <CharSep $mt={5} />
          <CharRow $mt={4}>
            <CharIcon $w={25}>
              <SerifMark $size={12} $c="#999">T</SerifMark>
              <SerifMark $size={20} $ml={-2}>T</SerifMark>
            </CharIcon>
            <CharField>180 <DottedUnit>点</DottedUnit></CharField>
            <DropButton><Caret /></DropButton>
            <CharIcon $w={31} $pl={10}>
              <StackMark><LeadingTop>A</LeadingTop><span>A</span></StackMark>
            </CharIcon>
            <CharField>40 <DottedUnit>点</DottedUnit></CharField>
            <DropButton><Caret /></DropButton>
          </CharRow>
          <CharRow $mt={5}>
            <CharIcon $w={25}>
              <TallArrow />
              <SerifMark $size={20} $ml={1}>T</SerifMark>
            </CharIcon>
            <CharField>98%</CharField>
            <CharIcon $w={49} $pl={26}>
              <StackMark>
                <SerifMark $size={20}>T</SerifMark>
                <WideArrow />
              </StackMark>
            </CharIcon>
            <CharField>100%</CharField>
          </CharRow>
          <CharSep $mt={4} />
          <CharRow $mt={5}>
            <CharIcon $w={25}>
              <StackMark>
                <BoxedKana>あ</BoxedKana>
                <WideArrow />
              </StackMark>
            </CharIcon>
            <CharField>0%</CharField>
            <DropButton><Caret /></DropButton>
          </CharRow>
          <CharRow $mt={5}>
            <CharIcon $w={25}>
              <StackMark>
                <KernLetters>AV</KernLetters>
                <WideArrow />
              </StackMark>
            </CharIcon>
            <CharField>0</CharField>
            <DropButton><Caret /></DropButton>
            <CharIcon $w={31} $pl={10}>
              <TrackLetters>A<TallArrow />V</TrackLetters>
            </CharIcon>
            <CharField $disabled />
            <DropButton><Caret /></DropButton>
          </CharRow>
          <CharSep $mt={4} />
          <CharRow $mt={5}>
            <CharIcon $w={25}>
              <ShiftLetters>A<sup>a</sup></ShiftLetters>
            </CharIcon>
            <CharField>-4.93 <DottedUnit>点</DottedUnit></CharField>
            <CharIcon $w={19} />
            <ColorLabel>颜色:</ColorLabel>
            <TextColor />
          </CharRow>
          <CharSep $mt={3} />
          <StyleButtons>
            <StyleGlyph $w={21}>T</StyleGlyph>
            <StyleGlyph $w={25} $italic>T</StyleGlyph>
            <StyleGlyph $w={25}>TT</StyleGlyph>
            <StyleGlyph $w={21}>Tr</StyleGlyph>
            <StyleGlyph $w={21}>T<sup>1</sup></StyleGlyph>
            <StyleGlyph $w={31}>T<sub>1</sub></StyleGlyph>
            <StyleGlyph $w={20} $under>T</StyleGlyph>
            <StyleGlyph $w={12} $strike>T</StyleGlyph>
          </StyleButtons>
          <CharSep $mt={3} />
          <CharRow $mt={9} $shift={-3}>
            <FontSelect $w={106}>美国英语<Caret /></FontSelect>
            <AaGlyph><sup>a</sup>a</AaGlyph>
            <FontSelect $w={55}>犀利<Caret /></FontSelect>
          </CharRow>
        </Panel>

        <Panel $h={324} $mt={4}>
          <TabStrip>
            <PanelTab $w={33}>色板</PanelTab>
            <PanelTab $w={47}>导航器</PanelTab>
            <PanelTab $w={47}>直方图</PanelTab>
            <PanelTab $w={59} $active>历史记录</PanelTab>
            <PanelMenu><Caret $c="#333" /><MenuLines /></PanelMenu>
          </TabStrip>
          <PanelBody $h={289}>
            <ListArea>
              <Snapshot>
                <SnapshotSource><BrushGlyph s={14} /></SnapshotSource>
                <Thumb />
                未标题-1
              </Snapshot>
              {historyItems.map((name, i) => (
                <HistoryRow key={name}>
                  <CheckCell>
                    {i === 4 && (
                      <StateMarker width="9" height="12" viewBox="0 0 9 12">
                        <path d="M1 1v10l7-5z" fill="#fff" stroke="#111" strokeWidth="1.300" />
                      </StateMarker>
                    )}
                  </CheckCell>
                  <HistoryName $selected={i === 4}>
                    <FileDocIcon />
                    {name}
                  </HistoryName>
                </HistoryRow>
              ))}
            </ListArea>
            <PanelScroll><UpCaret /><DownCaret /></PanelScroll>
          </PanelBody>
          <PanelFooter $h={17}>
            <FooterIcon $ml={150}><NewLayerIcon /></FooterIcon>
            <FooterIcon $ml={15}><CameraIcon /></FooterIcon>
            <FooterIcon $ml={14}><TrashIcon /></FooterIcon>
            <SizeGrip />
          </PanelFooter>
        </Panel>

        <Panel $h={324} $mt={4}>
          <TabStrip>
            <PanelTab $w={33}>图层</PanelTab>
            <PanelTab $w={37}>通道</PanelTab>
            <PanelTab $w={33} $active>路径</PanelTab>
            <PanelMenu><Caret $c="#333" /><MenuLines /></PanelMenu>
          </TabStrip>
          <PanelBody $h={289}>
            <ListArea>
              <PathRow>
                <PathThumb />
                <PathName>工作路径</PathName>
              </PathRow>
            </ListArea>
            <PanelScroll><UpCaret /><DownCaret /></PanelScroll>
          </PanelBody>
          <PanelFooter $h={17}>
            <FooterIcon $ml={67}>
              <I s={13}><circle cx="10" cy="10" r="8" fill="#666" stroke="#222" /></I>
            </FooterIcon>
            <FooterIcon $ml={16}>
              <I s={13}><circle cx="10" cy="10" r="8" fill="#ccc" stroke="#222" strokeWidth="1.500" /></I>
            </FooterIcon>
            <FooterIcon $ml={14}>
              <I s={13}><circle cx="10" cy="10" r="8" fill="none" stroke="#333" strokeDasharray="2 1.500" /></I>
            </FooterIcon>
            <FooterIcon $ml={12}>
              <I s={18}><path d="M1 15C5 5 15 5 19 15" fill="none" stroke="#555" strokeDasharray="2 1.500" /></I>
            </FooterIcon>
            <FooterIcon $ml={13}><NewItemIcon /></FooterIcon>
            <FooterIcon $ml={14}><TrashIcon /></FooterIcon>
          </PanelFooter>
        </Panel>
      </RightColumn>
      <RightGutter />
    </Main>
    <BottomEdge />

    <Watermark>
      <WaterTop>
        <Paw width="66" height="60" viewBox="0 0 66 60" fill="rgba(255,255,255,.5)">
          <ellipse cx="28" cy="9" rx="6.500" ry="8.500" />
          <ellipse cx="43" cy="13" rx="6.500" ry="8.500" />
          <ellipse cx="14" cy="21" rx="7" ry="8" transform="rotate(-20 14 21)" />
          <ellipse cx="55" cy="24" rx="7" ry="8" transform="rotate(20 55 24)" />
          <path d="M34 24c7 0 9 6 13 10 5 5 6 13 1 18-5 4-13 2-18 2s-11 3-16-1c-5-5-3-13 2-18 6-4 8-11 18-11z" />
        </Paw>
        <WaterBai>Bai</WaterBai>
        <WaterDu>du</WaterDu>
        <WaterCn>经验</WaterCn>
      </WaterTop>
      <WaterUrl>jingyan.baidu.com</WaterUrl>
    </Watermark>

    <Badge>3</Badge>

    <ImeBar>
      <span>中</span>
      <Moon size={13} fill="#3a84d0" strokeWidth={1} />
      <span>°,</span>
      <Wrench size={13} fill="#3a84d0" strokeWidth={1} />
      <svg width="13" height="15" viewBox="0 0 13 15" fill="#3a84d0">
        <path d="M1 3h5v12H1zM7 5h5v10H7zM3 0l6 2v2L3 2z" />
      </svg>
      <Smile size={15} strokeWidth={2} />
    </ImeBar>
    <ImeLogo>Q</ImeLogo>

    <ArrowLayer width="1000" height="1010" viewBox="0 0 1000 1010">
      <g fill="#f23a3a">
        <path d="M514 431 522 410 516.500 413 514 381 511.500 413 506 410z" />
        <path d="M31 655 51 647 47 653 88 655 47 657 51 663z" />
        <path d="M840 676 838 660 844 661 858 620 849 663 852 662z" />
        <path d="M787 745 796 773 790 769 785 825 782 769 779 773z" />
        <path d="M857 975 848 965 853 966 862 937 858 967 864 968z" />
      </g>
    </ArrowLayer>
  </Page>
);

export default App;
